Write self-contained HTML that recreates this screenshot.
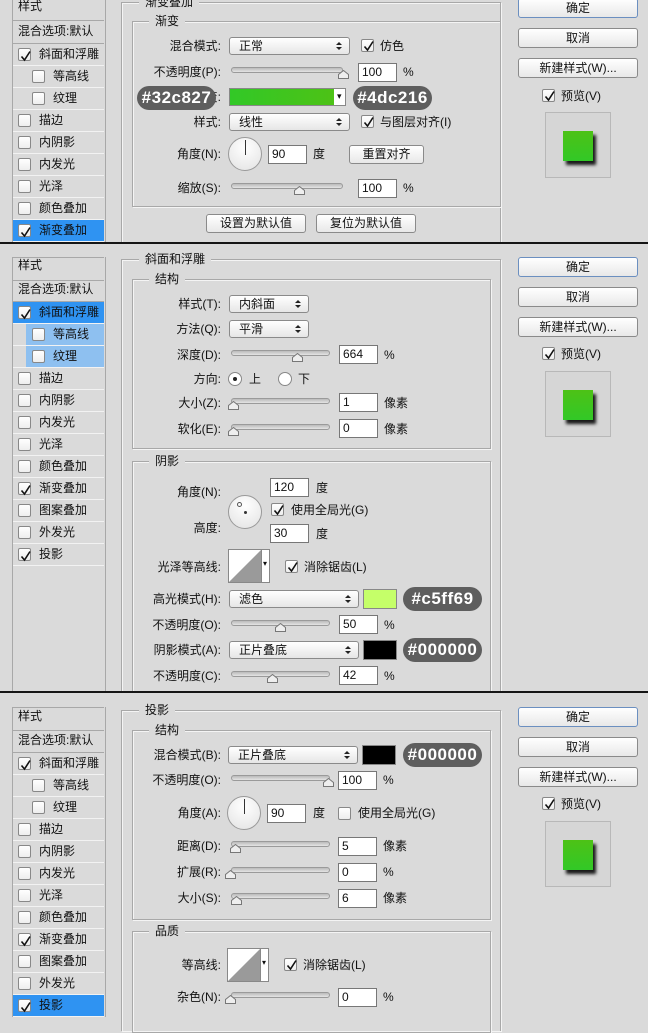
<!DOCTYPE html><html><head><meta charset="utf-8"><style>
body{margin:0;width:648px;height:1014px;overflow:hidden;background:#dadada;font-family:"Liberation Sans","Noto Sans CJK SC",sans-serif;font-size:12px;color:#111;position:relative}
.a{position:absolute}
.t{position:absolute;font-size:12px;line-height:14px;white-space:nowrap}
.l{position:absolute;font-size:12px;line-height:14px;white-space:nowrap;right:427px;text-align:right}
.s{position:absolute;height:18px;border:1px solid #8a8a8a;border-radius:3px;background:linear-gradient(#fff,#e6e6e6);font-size:12px;line-height:16px;padding-left:9px;box-sizing:border-box}
.s:before{content:"";position:absolute;right:7px;top:4px;border:3px solid transparent;border-bottom:3px solid #222;border-top:0}
.s:after{content:"";position:absolute;right:7px;top:9px;border:3px solid transparent;border-top:3px solid #222;border-bottom:0}
.i{position:absolute;height:19px;width:39px;border:1px solid #777;background:#fff;box-sizing:border-box;font-size:12px;line-height:17px;padding-left:3px}
.c{position:absolute;width:13px;height:13px;border:1px solid #888;border-radius:2px;background:linear-gradient(#fff,#eee);box-sizing:border-box}
.b{position:absolute;height:24px;width:79px;background:#5e5e5e;color:#fff;border-radius:12px;font:bold 17px/24px "Liberation Sans",sans-serif;text-align:center;letter-spacing:0.5px}
.btn{position:absolute;height:20px;border:1px solid #8a8a8a;border-radius:3px;background:linear-gradient(#fff,#e8e8e8);box-sizing:border-box;text-align:center;font-size:12px;line-height:18px}
.tr{position:absolute;height:4px;border:1px solid #9a9a9a;border-radius:3px;background:linear-gradient(#bbb,#e4e4e4)}
.th{position:absolute;width:11px;height:9px}
.d{position:absolute;width:34px;height:34px;border-radius:50%;border:1px solid #999;background:radial-gradient(circle at 50% 30%,#fff,#e2e2e2);box-sizing:border-box}
.fs{position:absolute;border:1px solid #a8a8a8;box-shadow:1px 1px 0 #f4f4f4 inset,1px 1px 0 #f4f4f4}
.ft{position:absolute;background:#dadada;padding:0 6px;font-size:12px;line-height:14px}
.sb{position:absolute;left:12px;width:92px;border-left:1px solid #a8a8a8;border-right:1px solid #a8a8a8}
.row{position:absolute;left:13px;width:91px;height:21px;border-bottom:1px solid #f2f2f2;font-size:12px;line-height:21px}
.row .c{top:4px}
.sep{position:absolute;left:0;width:648px;height:2px;background:#151515}
.pv{position:absolute;left:545px;width:64px;height:64px;border:1px solid #b8b8b8;background:#d6d6d6}
.pv div{position:absolute;left:17px;top:18px;width:30px;height:30px;background:linear-gradient(#4dc216,#32c827);box-shadow:3px 4px 3px #1a1a1a}
.ct{position:absolute;width:42px;height:34px;border:1px solid #888;background:#fff;box-sizing:border-box}
</style></head><body>
<svg width="0" height="0" style="position:absolute"><defs>
<symbol id="ck" viewBox="0 0 13 13"><path d="M2.5 6.5 L5.5 10 L11 1.5" fill="none" stroke="#111" stroke-width="1.6"/></symbol>
<symbol id="tm" viewBox="0 0 11 9"><path d="M0.5 8.5 L0.5 4.5 L5.5 0.5 L10.5 4.5 L10.5 8.5 Z" fill="#eee" stroke="#777"/></symbol>
</defs></svg>

<!-- ============ PANEL 1 ============ -->
<div class="sb" style="top:-1px;height:244px"></div>
<div class="t" style="left:18px;top:-1px">样式</div>
<div class="a" style="left:13px;top:20px;width:91px;height:1px;background:#a8a8a8"></div>
<div class="t" style="left:18px;top:24px">混合选项:默认</div>
<div class="a" style="left:13px;top:43px;width:91px;height:1px;background:#a8a8a8"></div>
<div class="row" style="top:44px"><div class="c" style="left:5px"><svg width="13" height="13"><use href="#ck"/></svg></div><span style="margin-left:26px">斜面和浮雕</span></div>
<div class="row" style="top:66px"><div class="c" style="left:19px"></div><span style="margin-left:40px">等高线</span></div>
<div class="row" style="top:88px"><div class="c" style="left:19px"></div><span style="margin-left:40px">纹理</span></div>
<div class="row" style="top:110px"><div class="c" style="left:5px"></div><span style="margin-left:26px">描边</span></div>
<div class="row" style="top:132px"><div class="c" style="left:5px"></div><span style="margin-left:26px">内阴影</span></div>
<div class="row" style="top:154px"><div class="c" style="left:5px"></div><span style="margin-left:26px">内发光</span></div>
<div class="row" style="top:176px"><div class="c" style="left:5px"></div><span style="margin-left:26px">光泽</span></div>
<div class="row" style="top:198px"><div class="c" style="left:5px"></div><span style="margin-left:26px">颜色叠加</span></div>
<div class="row" style="top:220px;background:#2f93f2"><div class="c" style="left:5px"><svg width="13" height="13"><use href="#ck"/></svg></div><span style="margin-left:26px">渐变叠加</span></div>

<div class="fs" style="left:121px;top:2px;width:378px;height:260px;border-bottom:0"></div>
<div class="ft" style="left:139px;top:-5px">渐变叠加</div>
<div class="fs" style="left:132px;top:21px;width:367px;height:184px"></div>
<div class="ft" style="left:149px;top:14px">渐变</div>
<div class="l" style="top:39px">混合模式:</div>
<div class="s" style="left:229px;top:37px;width:121px">正常</div>
<div class="c" style="left:361px;top:39px"><svg width="13" height="13"><use href="#ck"/></svg></div><div class="t" style="left:380px;top:39px">仿色</div>
<div class="l" style="top:65px">不透明度(P):</div>
<div class="tr" style="left:231px;top:67px;width:110px"></div><svg class="th" style="left:338px;top:70px"><use href="#tm"/></svg>
<div class="i" style="left:358px;top:63px">100</div><div class="t" style="left:403px;top:65px">%</div>
<div class="l" style="top:90px">渐变:</div>
<div class="a" style="left:229px;top:88px;width:117px;height:18px;border:1px solid #888;box-sizing:border-box;background:#fff"><div class="a" style="left:0;top:0;width:104px;height:16px;background:linear-gradient(90deg,#32c827,#4dc216)"></div><div class="t" style="left:107px;top:0;font-size:9px">▾</div></div>
<div class="b" style="left:137px;top:86px">#32c827</div>
<div class="b" style="left:353px;top:86px">#4dc216</div>
<div class="l" style="top:115px">样式:</div>
<div class="s" style="left:229px;top:113px;width:121px">线性</div>
<div class="c" style="left:361px;top:115px"><svg width="13" height="13"><use href="#ck"/></svg></div><div class="t" style="left:380px;top:115px">与图层对齐(I)</div>
<div class="l" style="top:147px">角度(N):</div>
<div class="d" style="left:228px;top:137px"><div class="a" style="left:16px;top:2px;width:1px;height:15px;background:#333"></div></div>
<div class="i" style="left:268px;top:145px">90</div><div class="t" style="left:313px;top:147px">度</div>
<div class="btn" style="left:349px;top:145px;width:75px;height:19px;line-height:17px">重置对齐</div>
<div class="l" style="top:181px">缩放(S):</div>
<div class="tr" style="left:231px;top:183px;width:110px"></div><svg class="th" style="left:294px;top:186px"><use href="#tm"/></svg>
<div class="i" style="left:358px;top:179px">100</div><div class="t" style="left:403px;top:181px">%</div>
<div class="btn" style="left:206px;top:214px;width:100px;height:19px;line-height:17px">设置为默认值</div>
<div class="btn" style="left:316px;top:214px;width:100px;height:19px;line-height:17px">复位为默认值</div>

<div class="btn" style="left:518px;top:-2px;width:120px;border-color:#6b8fc0">确定</div>
<div class="btn" style="left:518px;top:28px;width:120px">取消</div>
<div class="btn" style="left:518px;top:58px;width:120px">新建样式(W)...</div>
<div class="c" style="left:542px;top:89px"><svg width="13" height="13"><use href="#ck"/></svg></div><div class="t" style="left:561px;top:89px">预览(V)</div>
<div class="pv" style="top:112px"><div></div></div>

<div class="sep" style="top:242px"></div>
<div class="a" style="left:0;top:244px;width:648px;height:449px;background:#dadada"></div>

<!-- ============ PANEL 2 ============ -->
<div class="sb" style="top:257px;height:436px"></div>
<div class="a" style="left:13px;top:257px;width:91px;height:1px;background:#a8a8a8"></div>
<div class="t" style="left:18px;top:258px">样式</div>
<div class="a" style="left:13px;top:280px;width:91px;height:1px;background:#a8a8a8"></div>
<div class="t" style="left:18px;top:282px">混合选项:默认</div>
<div class="a" style="left:13px;top:301px;width:91px;height:1px;background:#a8a8a8"></div>
<div class="row" style="top:302px;background:#2f93f2"><div class="c" style="left:5px"><svg width="13" height="13"><use href="#ck"/></svg></div><span style="margin-left:26px">斜面和浮雕</span></div>
<div class="row" style="top:324px;background:linear-gradient(90deg,#dadada 13px,#8ec0f0 13px)"><div class="c" style="left:19px"></div><span style="margin-left:40px">等高线</span></div>
<div class="row" style="top:346px;background:linear-gradient(90deg,#dadada 13px,#8ec0f0 13px)"><div class="c" style="left:19px"></div><span style="margin-left:40px">纹理</span></div>
<div class="row" style="top:368px"><div class="c" style="left:5px"></div><span style="margin-left:26px">描边</span></div>
<div class="row" style="top:390px"><div class="c" style="left:5px"></div><span style="margin-left:26px">内阴影</span></div>
<div class="row" style="top:412px"><div class="c" style="left:5px"></div><span style="margin-left:26px">内发光</span></div>
<div class="row" style="top:434px"><div class="c" style="left:5px"></div><span style="margin-left:26px">光泽</span></div>
<div class="row" style="top:456px"><div class="c" style="left:5px"></div><span style="margin-left:26px">颜色叠加</span></div>
<div class="row" style="top:478px"><div class="c" style="left:5px"><svg width="13" height="13"><use href="#ck"/></svg></div><span style="margin-left:26px">渐变叠加</span></div>
<div class="row" style="top:500px"><div class="c" style="left:5px"></div><span style="margin-left:26px">图案叠加</span></div>
<div class="row" style="top:522px"><div class="c" style="left:5px"></div><span style="margin-left:26px">外发光</span></div>
<div class="row" style="top:544px"><div class="c" style="left:5px"><svg width="13" height="13"><use href="#ck"/></svg></div><span style="margin-left:26px">投影</span></div>

<div class="fs" style="left:121px;top:259px;width:378px;height:460px;border-bottom:0"></div>
<div class="ft" style="left:139px;top:252px">斜面和浮雕</div>
<div class="fs" style="left:132px;top:279px;width:357px;height:168px"></div>
<div class="ft" style="left:149px;top:272px">结构</div>
<div class="l" style="top:297px">样式(T):</div>
<div class="s" style="left:229px;top:295px;width:80px">内斜面</div>
<div class="l" style="top:322px">方法(Q):</div>
<div class="s" style="left:229px;top:320px;width:80px">平滑</div>
<div class="l" style="top:348px">深度(D):</div>
<div class="tr" style="left:231px;top:350px;width:97px"></div><svg class="th" style="left:292px;top:353px"><use href="#tm"/></svg>
<div class="i" style="left:339px;top:345px">664</div><div class="t" style="left:384px;top:348px">%</div>
<div class="l" style="top:372px">方向:</div>
<div class="a" style="left:228px;top:372px;width:14px;height:14px;border-radius:50%;border:1px solid #888;background:#fff;box-sizing:border-box"><div class="a" style="left:4px;top:4px;width:4px;height:4px;border-radius:50%;background:#222"></div></div><div class="t" style="left:249px;top:372px">上</div>
<div class="a" style="left:278px;top:372px;width:14px;height:14px;border-radius:50%;border:1px solid #888;background:#fff;box-sizing:border-box"></div><div class="t" style="left:298px;top:372px">下</div>
<div class="l" style="top:396px">大小(Z):</div>
<div class="tr" style="left:231px;top:398px;width:97px"></div><svg class="th" style="left:228px;top:401px"><use href="#tm"/></svg>
<div class="i" style="left:339px;top:393px">1</div><div class="t" style="left:384px;top:396px">像素</div>
<div class="l" style="top:422px">软化(E):</div>
<div class="tr" style="left:231px;top:424px;width:97px"></div><svg class="th" style="left:228px;top:427px"><use href="#tm"/></svg>
<div class="i" style="left:339px;top:419px">0</div><div class="t" style="left:384px;top:422px">像素</div>

<div class="fs" style="left:132px;top:461px;width:357px;height:260px"></div>
<div class="ft" style="left:149px;top:454px">阴影</div>
<div class="l" style="top:485px">角度(N):</div>
<div class="d" style="left:228px;top:495px"><div class="a" style="left:8px;top:6px;width:5px;height:5px;border-radius:50%;border:1px solid #555;box-sizing:border-box"></div><div class="a" style="left:15px;top:15px;width:3px;height:3px;border-radius:50%;background:#333"></div></div>
<div class="i" style="left:270px;top:478px">120</div><div class="t" style="left:316px;top:481px">度</div>
<div class="c" style="left:271px;top:503px"><svg width="13" height="13"><use href="#ck"/></svg></div><div class="t" style="left:291px;top:503px">使用全局光(G)</div>
<div class="l" style="top:521px">高度:</div>
<div class="i" style="left:270px;top:524px">30</div><div class="t" style="left:316px;top:527px">度</div>
<div class="l" style="top:560px">光泽等高线:</div>
<div class="ct" style="left:228px;top:549px"><svg class="a" style="left:0;top:0" width="33" height="32"><polygon points="0,32 32,0 32,32" fill="#9a9a9a"/></svg><div class="a" style="left:32px;top:0;width:1px;height:32px;background:#888"></div><div class="t" style="left:34px;top:7px;font-size:8px">▾</div></div>
<div class="c" style="left:285px;top:560px"><svg width="13" height="13"><use href="#ck"/></svg></div><div class="t" style="left:304px;top:560px">消除锯齿(L)</div>
<div class="l" style="top:592px">高光模式(H):</div>
<div class="s" style="left:229px;top:590px;width:130px">滤色</div>
<div class="a" style="left:363px;top:589px;width:34px;height:20px;background:#c5ff69;border:1px solid #888;box-sizing:border-box"></div>
<div class="b" style="left:403px;top:587px">#c5ff69</div>
<div class="l" style="top:618px">不透明度(O):</div>
<div class="tr" style="left:231px;top:620px;width:97px"></div><svg class="th" style="left:275px;top:623px"><use href="#tm"/></svg>
<div class="i" style="left:339px;top:615px">50</div><div class="t" style="left:384px;top:618px">%</div>
<div class="l" style="top:643px">阴影模式(A):</div>
<div class="s" style="left:229px;top:641px;width:130px">正片叠底</div>
<div class="a" style="left:363px;top:640px;width:34px;height:20px;background:#000;border:1px solid #888;box-sizing:border-box"></div>
<div class="b" style="left:403px;top:638px">#000000</div>
<div class="l" style="top:669px">不透明度(C):</div>
<div class="tr" style="left:231px;top:671px;width:97px"></div><svg class="th" style="left:267px;top:674px"><use href="#tm"/></svg>
<div class="i" style="left:339px;top:666px">42</div><div class="t" style="left:384px;top:669px">%</div>

<div class="btn" style="left:518px;top:257px;width:120px;border-color:#6b8fc0">确定</div>
<div class="btn" style="left:518px;top:287px;width:120px">取消</div>
<div class="btn" style="left:518px;top:317px;width:120px">新建样式(W)...</div>
<div class="c" style="left:542px;top:347px"><svg width="13" height="13"><use href="#ck"/></svg></div><div class="t" style="left:561px;top:347px">预览(V)</div>
<div class="pv" style="top:371px"><div></div></div>

<div class="sep" style="top:691px"></div>
<div class="a" style="left:0;top:693px;width:648px;height:321px;background:#dadada"></div>

<!-- ============ PANEL 3 ============ -->
<div class="sb" style="top:707px;height:310px"></div>
<div class="a" style="left:13px;top:707px;width:91px;height:1px;background:#a8a8a8"></div>
<div class="t" style="left:18px;top:709px">样式</div>
<div class="a" style="left:13px;top:730px;width:91px;height:1px;background:#a8a8a8"></div>
<div class="t" style="left:18px;top:733px">混合选项:默认</div>
<div class="a" style="left:13px;top:752px;width:91px;height:1px;background:#a8a8a8"></div>
<div class="row" style="top:753px"><div class="c" style="left:5px"><svg width="13" height="13"><use href="#ck"/></svg></div><span style="margin-left:26px">斜面和浮雕</span></div>
<div class="row" style="top:775px"><div class="c" style="left:19px"></div><span style="margin-left:40px">等高线</span></div>
<div class="row" style="top:797px"><div class="c" style="left:19px"></div><span style="margin-left:40px">纹理</span></div>
<div class="row" style="top:819px"><div class="c" style="left:5px"></div><span style="margin-left:26px">描边</span></div>
<div class="row" style="top:841px"><div class="c" style="left:5px"></div><span style="margin-left:26px">内阴影</span></div>
<div class="row" style="top:863px"><div class="c" style="left:5px"></div><span style="margin-left:26px">内发光</span></div>
<div class="row" style="top:885px"><div class="c" style="left:5px"></div><span style="margin-left:26px">光泽</span></div>
<div class="row" style="top:907px"><div class="c" style="left:5px"></div><span style="margin-left:26px">颜色叠加</span></div>
<div class="row" style="top:929px"><div class="c" style="left:5px"><svg width="13" height="13"><use href="#ck"/></svg></div><span style="margin-left:26px">渐变叠加</span></div>
<div class="row" style="top:951px"><div class="c" style="left:5px"></div><span style="margin-left:26px">图案叠加</span></div>
<div class="row" style="top:973px"><div class="c" style="left:5px"></div><span style="margin-left:26px">外发光</span></div>
<div class="row" style="top:995px;background:#2f93f2"><div class="c" style="left:5px"><svg width="13" height="13"><use href="#ck"/></svg></div><span style="margin-left:26px">投影</span></div>

<div class="fs" style="left:121px;top:710px;width:378px;height:320px;border-bottom:0"></div>
<div class="ft" style="left:139px;top:703px">投影</div>
<div class="fs" style="left:132px;top:730px;width:357px;height:188px"></div>
<div class="ft" style="left:149px;top:723px">结构</div>
<div class="l" style="top:748px">混合模式(B):</div>
<div class="s" style="left:228px;top:746px;width:130px">正片叠底</div>
<div class="a" style="left:362px;top:745px;width:34px;height:20px;background:#000;border:1px solid #888;box-sizing:border-box"></div>
<div class="b" style="left:403px;top:743px">#000000</div>
<div class="l" style="top:773px">不透明度(O):</div>
<div class="tr" style="left:231px;top:775px;width:97px"></div><svg class="th" style="left:323px;top:778px"><use href="#tm"/></svg>
<div class="i" style="left:338px;top:771px">100</div><div class="t" style="left:383px;top:773px">%</div>
<div class="l" style="top:806px">角度(A):</div>
<div class="d" style="left:227px;top:796px"><div class="a" style="left:16px;top:2px;width:1px;height:15px;background:#333"></div></div>
<div class="i" style="left:267px;top:804px">90</div><div class="t" style="left:313px;top:806px">度</div>
<div class="c" style="left:338px;top:807px"></div><div class="t" style="left:358px;top:806px">使用全局光(G)</div>
<div class="l" style="top:839px">距离(D):</div>
<div class="tr" style="left:231px;top:841px;width:97px"></div><svg class="th" style="left:230px;top:844px"><use href="#tm"/></svg>
<div class="i" style="left:338px;top:837px">5</div><div class="t" style="left:383px;top:839px">像素</div>
<div class="l" style="top:865px">扩展(R):</div>
<div class="tr" style="left:231px;top:867px;width:97px"></div><svg class="th" style="left:225px;top:870px"><use href="#tm"/></svg>
<div class="i" style="left:338px;top:863px">0</div><div class="t" style="left:383px;top:865px">%</div>
<div class="l" style="top:891px">大小(S):</div>
<div class="tr" style="left:231px;top:893px;width:97px"></div><svg class="th" style="left:231px;top:896px"><use href="#tm"/></svg>
<div class="i" style="left:338px;top:889px">6</div><div class="t" style="left:383px;top:891px">像素</div>

<div class="fs" style="left:132px;top:931px;width:357px;height:100px"></div>
<div class="ft" style="left:149px;top:924px">品质</div>
<div class="l" style="top:958px">等高线:</div>
<div class="ct" style="left:227px;top:948px"><svg class="a" style="left:0;top:0" width="33" height="32"><polygon points="0,32 32,0 32,32" fill="#9a9a9a"/></svg><div class="a" style="left:32px;top:0;width:1px;height:32px;background:#888"></div><div class="t" style="left:34px;top:7px;font-size:8px">▾</div></div>
<div class="c" style="left:284px;top:958px"><svg width="13" height="13"><use href="#ck"/></svg></div><div class="t" style="left:303px;top:958px">消除锯齿(L)</div>
<div class="l" style="top:990px">杂色(N):</div>
<div class="tr" style="left:231px;top:992px;width:97px"></div><svg class="th" style="left:225px;top:995px"><use href="#tm"/></svg>
<div class="i" style="left:338px;top:988px">0</div><div class="t" style="left:383px;top:990px">%</div>

<div class="btn" style="left:518px;top:707px;width:120px;border-color:#6b8fc0">确定</div>
<div class="btn" style="left:518px;top:737px;width:120px">取消</div>
<div class="btn" style="left:518px;top:767px;width:120px">新建样式(W)...</div>
<div class="c" style="left:542px;top:797px"><svg width="13" height="13"><use href="#ck"/></svg></div><div class="t" style="left:561px;top:797px">预览(V)</div>
<div class="pv" style="top:821px"><div></div></div>
</body></html>
